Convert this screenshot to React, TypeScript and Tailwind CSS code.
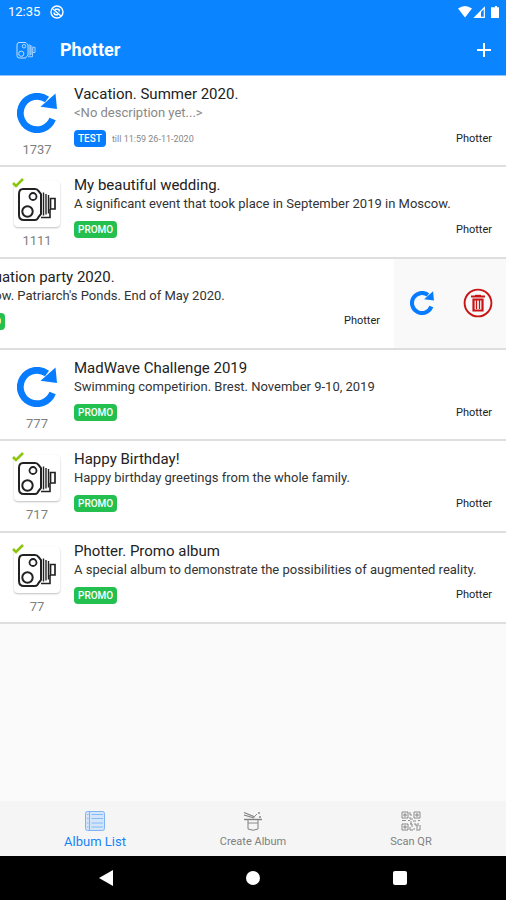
/**
 * Album list screen
 */

import { useState } from "react";
import type { ReactNode } from "react";

interface Album {
  id: number;
  title: string;
  description?: string;
  badge: "TEST" | "PROMO";
  expires?: string;
  owner: string;
  downloaded: boolean;
  swiped?: boolean;
}

type TabId = "list" | "create" | "scan";

const ALBUMS: Album[] = [
  {
    id: 1737,
    title: "Vacation. Summer 2020.",
    badge: "TEST",
    expires: "till 11:59 26-11-2020",
    owner: "Photter",
    downloaded: false,
  },
  {
    id: 1111,
    title: "My beautiful wedding.",
    description: "A significant event that took place in September 2019 in Moscow.",
    badge: "PROMO",
    owner: "Photter",
    downloaded: true,
  },
  {
    id: 999,
    title: "Graduation party 2020.",
    description: "Moscow. Patriarch's Ponds. End of May 2020.",
    badge: "PROMO",
    owner: "Photter",
    downloaded: true,
    swiped: true,
  },
  {
    id: 777,
    title: "MadWave Challenge 2019",
    description: "Swimming competirion. Brest. November 9-10, 2019",
    badge: "PROMO",
    owner: "Photter",
    downloaded: false,
  },
  {
    id: 717,
    title: "Happy Birthday!",
    description: "Happy birthday greetings from the whole family.",
    badge: "PROMO",
    owner: "Photter",
    downloaded: true,
  },
  {
    id: 77,
    title: "Photter. Promo album",
    description: "A special album to demonstrate the possibilities of augmented reality.",
    badge: "PROMO",
    owner: "Photter",
    downloaded: true,
  },
];

const TABS: { id: TabId; label: string; icon: ReactNode }[] = [
  { id: "list", label: "Album List", icon: <ListIcon /> },
  { id: "create", label: "Create Album", icon: <HatIcon /> },
  { id: "scan", label: "Scan QR", icon: <QrIcon /> },
];

function ReloadIcon({ className }: { className: string }) {
  return (
    <svg className={className} viewBox="0 0 40 40" fill="none" aria-hidden="true">
      <path d="M35.6 26A16.7 16.7 0 1 1 30 6.6" stroke="#087cff" strokeWidth="6.8" />
      <path d="M38.5 0.5L40 16L23.5 13.7Z" fill="#087cff" />
    </svg>
  );
}

function CameraIcon({ className }: { className: string }) {
  return (
    <svg className={className} viewBox="0 0 40 36" fill="none" stroke="currentColor" aria-hidden="true">
      <path
        d="M6 3H18Q20.500 3 21.500 5L24 8V28L21.500 31Q20.500 34 18 34H7Q2 34 2 29V8Q2 3 6 3Z"
        strokeWidth="2"
      />
      <circle cx="16" cy="10.5" r="3.5" strokeWidth="1.8" />
      <circle cx="10.500" cy="25.500" r="5.2" strokeWidth="2" />
      <path d="M26.500 6.500V29.500M29 8V28.500M31.500 9V27.500" strokeWidth="1.4" />
      <path d="M24 31.500H33V23" strokeWidth="1.6" />
      <path d="M33.500 12.500H38V23H33.500Z" strokeWidth="1.7" />
    </svg>
  );
}

function TrashIcon() {
  return (
    <svg className="h-[30px] w-[30px]" viewBox="0 0 30 30" fill="none" stroke="#c81414" aria-hidden="true">
      <circle cx="15" cy="15" r="13.4" strokeWidth="1.9" />
      <path d="M8 8.500H22" strokeWidth="2" />
      <path d="M12 7.500H18" strokeWidth="1.4" />
      <path d="M10.500 11.500H19.500V22.500H10.500Z" strokeWidth="2.2" />
      <path d="M13.500 12V21M16.500 12V21" strokeWidth="1.3" />
    </svg>
  );
}

function ListIcon() {
  return (
    <svg className="h-5 w-5" viewBox="0 0 20 20" fill="none" stroke="#7fb3f3" aria-hidden="true">
      <rect x="0.5" y="0.5" width="19" height="19" rx="2" fill="#d3e5fb" />
      <path d="M4.5 1V19" />
      <path d="M6.5 3.5H18M6.5 7.5H18M6.5 12H18M6.5 16H18" strokeWidth="0.9" />
      <path d="M2 3.5H3.5M2 7.5H3.5M2 12H3.5M2 16H3.5" strokeWidth="0.9" />
    </svg>
  );
}

function HatIcon() {
  return (
    <svg className="h-5 w-5" viewBox="0 0 20 20" fill="none" stroke="currentColor" aria-hidden="true">
      <path d="M1 1.5L12 6M1 4L11 7" strokeWidth="1.2" />
      <path d="M1 8.5H19" strokeWidth="1.4" />
      <path d="M5 9V18Q10 20.5 15 18V9" />
      <path d="M5 12H15M12 5L14 3M16 1V3M15 2H17M17 5V7M16 6H18" strokeWidth="0.9" />
    </svg>
  );
}

function QrIcon() {
  return (
    <svg className="h-5 w-5" viewBox="0 0 20 20" fill="none" stroke="currentColor" strokeWidth="0.9" aria-hidden="true">
      <path d="M1 1H7V7H1ZM13 1H19V7H13ZM1 13H7V19H1Z" />
      <path d="M3 3H5V5H3ZM15 3H17V5H15ZM3 15H5V17H3Z" />
      <path d="M9 1V4H11M9 6V8H12M10 10V13M1 9.5H5M7 9.5H9M12 10H15M17 9.5H19M9 13H11V16M9 16V19H12M13 13H15V15H17V12M19 14V19H15M13 17V19M17 17H15" />
    </svg>
  );
}

function StatusBar() {
  return (
    <div className="flex h-6 items-center pl-2 pr-1.5 text-white">
      <span className="text-[13px] leading-4">12:35</span>
      <svg className="ml-2.5 h-3.5 w-3.5" viewBox="0 0 14 14" fill="none" stroke="currentColor" aria-hidden="true">
        <circle cx="7" cy="7" r="6" strokeWidth="1.4" />
        <path d="M3 4L11 11M5 4.2H8Q10 4.5 9 6.5M4 7.5Q4 9.5 6 9.8H8" strokeWidth="1.5" />
      </svg>
      <svg className="ml-auto h-3 w-[42px]" viewBox="0 0 42 12" fill="currentColor" aria-hidden="true">
        <path d="M0 2.5Q7 -2.5 14 2.5L7 11.5Z" />
        <path d="M26.3 1.8V11.3H16.8Z" fill="none" stroke="currentColor" strokeWidth="1.2" />
        <path d="M23 5V11H17Z" />
        <path d="M35 1.2H37V0H39V1.2H41V12H33V1.2Z" />
      </svg>
    </div>
  );
}

function Thumbnail({ album }: { album: Album }) {
  return (
    <div className="flex w-[74px] shrink-0 flex-col items-center">
      {album.downloaded ? (
        <div className="relative mt-3.5 flex h-[46px] w-[46px] items-center justify-center rounded-sm bg-white text-[#222] shadow-[0_1px_2px_rgba(0,0,0,0.25)]">
          <CameraIcon className="h-9 w-10" />
          <svg className="absolute -left-0.5 -top-1 h-3 w-3" viewBox="0 0 12 12" fill="none" aria-hidden="true">
            <path d="M1 6L4 9L11 2" stroke="#8cc60c" strokeWidth="2.6" />
          </svg>
        </div>
      ) : (
        <div className="mt-3.5 flex h-[46px] items-center">
          <ReloadIcon className="h-10 w-10" />
        </div>
      )}
      <span className="mt-1 text-[13px] leading-5 text-[#808080]">{album.id}</span>
    </div>
  );
}

function AlbumRow({ album }: { album: Album }) {
  return (
    <li className="flex justify-end overflow-hidden border-b-2 border-[#dedede] bg-white">
      <div className="flex w-full shrink-0">
        <Thumbnail album={album} />
        <div className="min-w-0 flex-1 pr-3.5 pt-2">
          <h2 className="text-[15px] leading-5 text-[#222]">{album.title}</h2>
          {album.description ? (
            <p className="whitespace-nowrap text-[13px] leading-[18px] text-[#333]">{album.description}</p>
          ) : (
            <p className="text-[13px] leading-[18px] text-[#888]">{"<No description yet...>"}</p>
          )}
          <div className="mt-2 flex items-center">
            <span
              className={`rounded px-1 text-[10px] font-medium leading-[17px] text-white ${
                album.badge === "TEST" ? "bg-[#087cff]" : "bg-[#24c04f]"
              }`}
            >
              {album.badge}
            </span>
            {album.expires && <span className="ml-1.5 text-[9px] leading-4 text-[#888]">{album.expires}</span>}
            <span className="ml-auto text-[11px] leading-4 text-[#222]">{album.owner}</span>
          </div>
        </div>
      </div>

      {/* Swipe actions */}
      {album.swiped && (
        <div className="flex w-28 shrink-0 items-center bg-[#f9f9f9]">
          <button type="button" aria-label="Reload album" className="flex flex-1 justify-center">
            <ReloadIcon className="h-6 w-6" />
          </button>
          <button type="button" aria-label="Delete album" className="flex flex-1 justify-center">
            <TrashIcon />
          </button>
        </div>
      )}
    </li>
  );
}

export default function App() {
  const [activeTab, setActiveTab] = useState<TabId>("list");

  return (
    <div className="flex min-h-screen flex-col bg-[#fafafa] font-['Roboto',sans-serif]">
      <header className="border-b border-[#8fc2fb] bg-[#0a84ff]">
        <StatusBar />
        <div className="flex h-[51px] items-center pl-4 pr-2.5 text-white">
          <CameraIcon className="h-[18px] w-5 opacity-75" />
          <h1 className="ml-6 text-lg font-bold leading-6">Photter</h1>
          <button type="button" aria-label="Add album" className="ml-auto p-1">
            <svg className="h-4 w-4" viewBox="0 0 16 16" stroke="currentColor" strokeWidth="2" aria-hidden="true">
              <path d="M8 1V15M1 8H15" />
            </svg>
          </button>
        </div>
      </header>

      <main className="flex-1">
        <ul className="grid min-h-[548px] auto-rows-fr">
          {ALBUMS.map((album) => (
            <AlbumRow key={album.id} album={album} />
          ))}
        </ul>
      </main>

      {/* Tabs */}
      <nav className="flex h-[55px] bg-[#f5f5f5] px-4">
        {TABS.map((tab) => (
          <button
            key={tab.id}
            type="button"
            onClick={() => setActiveTab(tab.id)}
            aria-current={activeTab === tab.id ? "page" : undefined}
            className={`flex flex-1 flex-col items-center gap-0.5 pt-2.5 ${
              activeTab === tab.id ? "text-[13px] leading-[18px] text-[#1583f7]" : "text-[11px] leading-[18px] text-[#808080]"
            }`}
          >
            {tab.icon}
            {tab.label}
          </button>
        ))}
      </nav>

      {/* System navigation */}
      <div className="flex h-11 items-center bg-black px-8 text-white">
        <button type="button" aria-label="Back" className="flex flex-1 justify-center">
          <svg className="h-4 w-4" viewBox="0 0 16 16" fill="currentColor" aria-hidden="true">
            <path d="M15 0V16L1 8Z" />
          </svg>
        </button>
        <button type="button" aria-label="Home" className="flex flex-1 justify-center">
          <span className="h-3.5 w-3.5 rounded-full bg-white" />
        </button>
        <button type="button" aria-label="Recent apps" className="flex flex-1 justify-center">
          <span className="h-3.5 w-3.5 rounded-xs bg-white" />
        </button>
      </div>
    </div>
  );
}
